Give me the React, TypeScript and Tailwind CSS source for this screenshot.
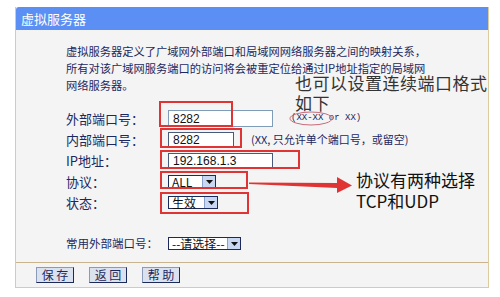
const cjk = { fontFamily: '"Noto Sans CJK SC", "Liberation Sans", sans-serif' };

function Select({ label, width }: { label: string; width: string }) {
  return (
    <div className={`flex h-[13px] items-stretch border border-[#1c2a5a] bg-white ${width}`}>
      <span className="flex-1 whitespace-nowrap pl-[3px] text-[12px] leading-[11px] text-[#111]">{label}</span>
      <span className="flex w-[13px] items-center justify-center border-l border-[#8aa0c8] bg-[#c9d8f2]">
        <svg width="7" height="4" viewBox="0 0 7 4">
          <path d="M0 0h7L3.5 4z" fill="#111" />
        </svg>
      </span>
    </div>
  );
}

function Row({ label, small, children }: { label: string; small?: boolean; children: React.ReactNode }) {
  return (
    <div className="flex h-[21px] items-center">
      <div className={`w-[102px] shrink-0 whitespace-nowrap text-[#1c2860] ${small ? 'text-[11.5px]' : 'text-[13px]'}`}>
        {label}
      </div>
      <div className="flex items-center">{children}</div>
    </div>
  );
}

const red = 'absolute border-2 border-[#e03434]';

export default function App() {
  return (
    <div className="relative h-[297px] w-[500px] overflow-hidden bg-white" style={cjk}>
      <div className="ml-[15px] mt-[7px] w-[474px] border-x border-b border-[#dccb9f] bg-[#f4f4f4]">
        <div className="flex h-[23px] items-center rounded-tl-[3px] bg-[#5b8ff3] pl-[5px] text-[13px] text-white">
          虚拟服务器
        </div>
        <div className="pl-[50px] pt-[13px] pb-[8px]">
          <div className="text-[11.25px] leading-[17px] text-[#1c2860]">
            <div>虚拟服务器定义了广域网外部端口和局域网网络服务器之间的映射关系，</div>
            <div>所有对该广域网服务端口的访问将会被重定位给通过IP地址指定的局域网</div>
            <div>网络服务器。</div>
          </div>
          <div className="mt-[14px]">
            <Row label="外部端口号：">
              <div className="flex h-[17px] w-[105px] items-center border border-[#7f9db9] bg-white pl-[4px] text-[12px] text-[#111]" style={{ fontFamily: '"Liberation Sans", sans-serif' }}>
                8282
              </div>
              <span className="ml-[18px] text-[9px] text-[#1c2860]" style={{ fontFamily: '"Liberation Mono", monospace' }}>
                (XX-XX or XX)
              </span>
            </Row>
            <Row label="内部端口号：">
              <div className="flex h-[16px] w-[66px] items-center border border-[#4a5a7a] bg-white pl-[4px] text-[12px] text-[#111]" style={{ fontFamily: '"Liberation Sans", sans-serif' }}>
                8282
              </div>
              <span className="ml-[17px] text-[11px] text-[#1c2860]">(XX, 只允许单个端口号，或留空)</span>
            </Row>
            <Row label="IP地址：">
              <div className="flex h-[16px] w-[105px] items-center border border-[#4a5a7a] bg-white pl-[4px] text-[12px] text-[#111]" style={{ fontFamily: '"Liberation Sans", sans-serif' }}>
                192.168.1.3
              </div>
            </Row>
            <Row label="协议：">
              <Select label="ALL" width="w-[48px]" />
            </Row>
            <Row label="状态：">
              <Select label="生效" width="w-[50px]" />
            </Row>
            <div className="mt-[20px]">
              <Row label="常用外部端口号：" small>
                <Select label="--请选择--" width="w-[73px]" />
              </Row>
            </div>
          </div>
        </div>
        <div className="border-t border-[#c9b48e] px-[20px] py-[4px]">
          <div className="flex gap-[15px]">
            {['保 存', '返 回', '帮 助'].map((b) => (
              <button
                key={b}
                className="h-[16px] w-[38px] border border-[#8a9ab8] border-b-[#1c2a5a] border-r-[#1c2a5a] bg-[#dbe2ef] text-[12px] leading-[14px] text-[#1c2860]"
              >
                {b}
              </button>
            ))}
          </div>
        </div>
      </div>

      {/* annotations */}
      <div className={`${red} left-[159px] top-[101px] h-[26px] w-[74px]`} />
      <div className={`${red} left-[160px] top-[128px] h-[20px] w-[82px]`} />
      <div className={`${red} left-[160px] top-[150px] h-[19px] w-[140px]`} />
      <div className={`${red} left-[160px] top-[171px] h-[18px] w-[88px]`} />
      <div className={`${red} left-[160px] top-[192px] h-[22px] w-[89px]`} />

      <svg className="absolute left-0 top-0" width="500" height="297">
        <ellipse cx="311" cy="118.5" rx="21" ry="6.5" fill="none" stroke="#c86a7a" strokeWidth="1" />
        <polygon points="249,182.5 337,183 337,177 352,185.5 337,193 337,188 249,184" fill="#e03434" />
      </svg>

      <div className="absolute left-[295px] top-[73px] text-[17px] leading-[20px] tracking-[0.5px] text-[#333]">
        <div className="h-[20px]">也可以设置连续端口格式</div>
        <div className="h-[20px]">如下</div>
      </div>
      <div className="absolute left-[356px] top-[169px] text-[17px] leading-[21px] text-[#111]">
        <div className="h-[21px]">协议有两种选择</div>
        <div className="h-[21px]">TCP和UDP</div>
      </div>
    </div>
  );
}
